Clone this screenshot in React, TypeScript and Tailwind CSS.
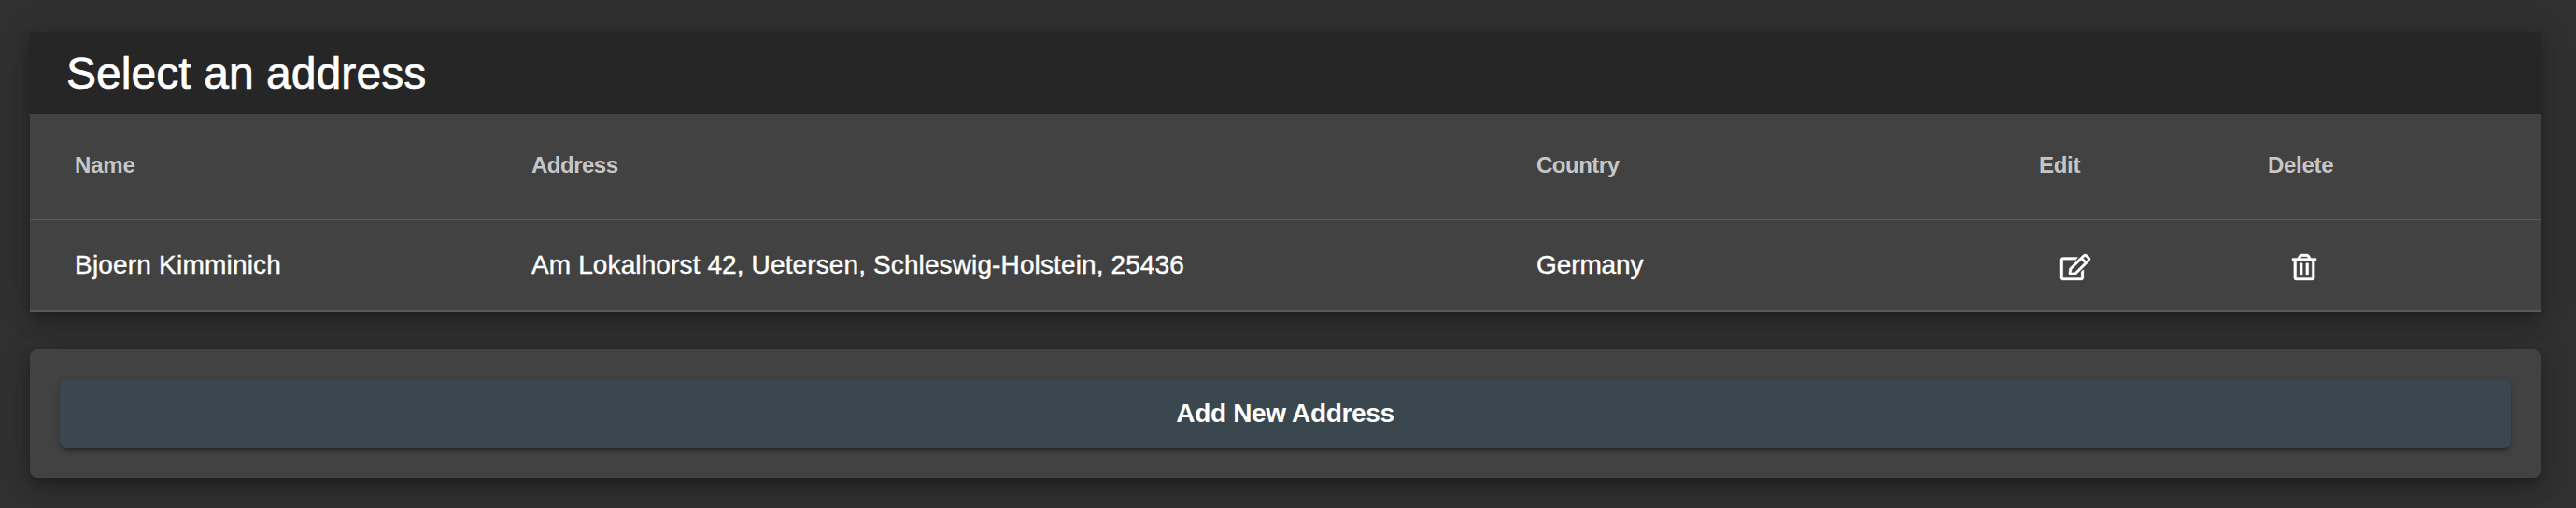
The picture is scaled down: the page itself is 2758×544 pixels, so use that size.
import React from "react";

const columns = "grid grid-cols-[489px_1076px_538px_245px_1fr] items-center border-b-2 border-[#595959] pl-12";
const cardShadow =
  "shadow-[0_6px_10px_-2px_rgba(0,0,0,0.2),0_12px_20px_rgba(0,0,0,0.14),0_2px_36px_rgba(0,0,0,0.12)]";

function EditIcon() {
  return (
    <svg viewBox="0 0 576 512" className="block h-[28px] w-8 overflow-visible" fill="currentColor" stroke="currentColor" strokeWidth="7" preserveAspectRatio="none">
      <path d="M402.3 344.9l32-32c5-5 13.7-1.5 13.7 5.7V464c0 26.5-21.5 48-48 48H48c-26.5 0-48-21.5-48-48V112c0-26.5 21.5-48 48-48h273.5c7.1 0 10.7 8.6 5.7 13.7l-32 32c-1.5 1.5-3.5 2.3-5.7 2.3H48v352h352V350.5c0-2.1.8-4.1 2.3-5.6zm156.6-201.8L296.3 405.7l-90.4 10c-26.2 2.9-48.5-19.2-45.6-45.6l10-90.4L432.9 17.1c22.9-22.9 59.9-22.9 82.7 0l43.2 43.2c22.9 22.9 22.9 60 .1 82.8zM460.1 174L402 115.9 216.2 301.8l-7.3 65.3 65.3-7.3L460.1 174zm64.8-79.7l-43.2-43.2c-4.1-4.1-10.8-4.1-14.8 0L436 82l58.1 58.1 30.9-30.9c4-4.2 4-10.8-.1-14.9z" />
    </svg>
  );
}

function TrashIcon() {
  return (
    <svg viewBox="0 0 448 512" className="block h-[28px] w-[26px] overflow-visible" fill="currentColor" stroke="currentColor" strokeWidth="7" preserveAspectRatio="none">
      <path d="M268 416h24a12 12 0 0 0 12-12V188a12 12 0 0 0-12-12h-24a12 12 0 0 0-12 12v216a12 12 0 0 0 12 12zM432 80h-82.41l-34-56.7A48 48 0 0 0 274.41 0H173.59a48 48 0 0 0-41.16 23.3L98.41 80H8A8 8 0 0 0 0 88v32a8 8 0 0 0 8 8h24v336a48 48 0 0 0 48 48h288a48 48 0 0 0 48-48V128h24a8 8 0 0 0 8-8V88a8 8 0 0 0-8-8zM171.84 50.91A6 6 0 0 1 177 48h94a6 6 0 0 1 5.15 2.91L293.61 80H154.39zM368 464H80V128h288zm-212-48h24a12 12 0 0 0 12-12V188a12 12 0 0 0-12-12h-24a12 12 0 0 0-12 12v216a12 12 0 0 0 12 12z" />
    </svg>
  );
}

export default function App() {
  return (
    <main className="h-[544px] overflow-hidden bg-[#303030] px-8 pt-[34px] font-['Liberation_Sans',Arial,sans-serif] text-[28px] text-white">
      <section className={`w-[2688px] bg-[#424242] ${cardShadow}`}>
        <h1 className="flex h-[88px] items-center bg-[#262626] pt-0.5 pl-[39px] text-[48px] tracking-[0.06px] [-webkit-text-stroke:0.7px]">
          Select an address
        </h1>
        <div className={`${columns} h-[114px] pb-0.5 text-[24px] font-bold tracking-[-0.5px] text-[#c6c6c6]`}>
          <span className="tracking-[-0.2px]">Name</span>
          <span>Address</span>
          <span>Country</span>
          <span className="tracking-[-0.3px]">Edit</span>
          <span className="tracking-[-0.3px]">Delete</span>
        </div>
        <div className={`${columns} h-[98px] tracking-[0.12px] [-webkit-text-stroke:0.4px]`}>
          <span className="tracking-[0.2px]">Bjoern Kimminich</span>
          <span>Am Lokalhorst 42, Uetersen, Schleswig-Holstein, 25436</span>
          <span className="tracking-[-0.1px]">Germany</span>
          <button className="mt-1 ml-[23px] w-8" aria-label="Edit"><EditIcon /></button>
          <button className="mt-1 ml-[26px] w-[26px]" aria-label="Delete"><TrashIcon /></button>
        </div>
      </section>
      <section className={`mt-10 h-[138px] w-[2688px] rounded-lg bg-[#424242] p-8 ${cardShadow}`}>
        <button className="h-[74px] w-full rounded-lg bg-[#3b474f] font-bold tracking-[-0.35px] shadow-[0_6px_2px_-4px_rgba(0,0,0,0.2),0_4px_4px_rgba(0,0,0,0.14),0_2px_10px_rgba(0,0,0,0.12)]">
          Add New Address
        </button>
      </section>
    </main>
  );
}
